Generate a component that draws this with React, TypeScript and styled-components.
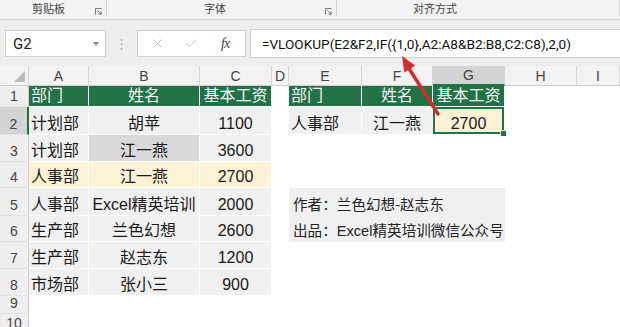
import React from "react";
import styled, { createGlobalStyle } from "styled-components";
import { X, Check } from "lucide-react";

const GREEN = "#217346";
const GREY = "#f0f0f0";
const DARK = "#d9d9d9";
const CREAM = "#fdf1d6";

const GlobalStyle = createGlobalStyle`
  html, body {
    margin: 0;
    padding: 0;
    background: #ffffff;
    overflow: hidden;
  }
  body {
    font-family: "Liberation Sans", "Noto Sans CJK SC", sans-serif;
    color: #222;
  }
`;

const Page = styled.div`
  position: relative;
  display: flex;
  flex-direction: column;
  width: 620px;
  height: 327px;
  overflow: hidden;
`;

const Ribbon = styled.div`
  display: flex;
  height: 20px;
  background: #f3f3f3;
  border-bottom: 1px solid #d8d8d8;
  box-shadow: 0 1px 2px rgba(0, 0, 0, 0.06);
`;

const Group = styled.div<{ $width: number; $pad: number }>`
  position: relative;
  display: flex;
  align-items: center;
  width: ${({ $width }) => $width}px;
  padding-left: ${({ $pad }) => $pad}px;
  box-sizing: border-box;
  border-right: 1px solid #d2d2d2;
  margin-bottom: 3px;
`;

const GroupLabel = styled.span`
  font-family: "Noto Sans CJK SC", sans-serif;
  font-size: 11px;
  color: #444;
  flex: 1;
`;

const Launcher = styled.svg`
  width: 7px;
  height: 7px;
  margin: 6px 4px 0 0;
  color: #666;
`;

const FormulaBand = styled.div`
  display: flex;
  align-items: center;
  height: 46px;
  padding: 10px 0 9px 5px;
  box-sizing: border-box;
  background: #eeeeee;
`;

const NameBox = styled.div`
  display: flex;
  align-items: center;
  justify-content: space-between;
  width: 101px;
  height: 27px;
  box-sizing: border-box;
  padding: 0 6px 0 7px;
  background: #fff;
  border: 1px solid #d0d0d0;
  font-family: "Roboto", "Liberation Sans", sans-serif;
  font-size: 15px;
  color: #222;
`;

const Caret = styled.span`
  width: 0;
  height: 0;
  border-left: 3.5px solid transparent;
  border-right: 3.5px solid transparent;
  border-top: 4px solid #888;
`;

const Dots = styled.span`
  width: 31px;
  text-align: center;
  color: #b0b0b0;
  font-size: 13px;
`;

const ActionBox = styled.div`
  display: flex;
  align-items: center;
  width: 109px;
  height: 27px;
  box-sizing: border-box;
  padding-left: 12px;
  gap: 19px;
  background: #fff;
  border: 1px solid #d0d0d0;
  color: #b8b8b8;
`;

const Fx = styled.span`
  margin-left: 3px;
  font-family: "Liberation Serif", serif;
  font-style: italic;
  font-size: 14px;
  color: #444;
  letter-spacing: -1px;
`;

const FormulaInput = styled.div`
  flex: 1;
  display: flex;
  align-items: center;
  height: 27px;
  margin-left: 4px;
  padding-left: 11px;
  background: #fff;
  border: 1px solid #d0d0d0;
  border-right: none;
  font-family: "Roboto", "Liberation Sans", sans-serif;
  font-size: 13.6px;
  color: #111;
  white-space: nowrap;
`;

const Sheet = styled.div`
  flex: 1;
  display: grid;
  grid-template-columns: 29px 60px 111px 72px 17px 73px 71px 72px 72px 1fr;
  grid-template-rows: 20px 21px 28px 27px 26px 28px 26px 27px 27px 18px 1fr;
  background: #fff;
`;

const Corner = styled.div`
  display: flex;
  align-items: flex-end;
  justify-content: flex-end;
  padding: 0 3px 3px 0;
  background: #f3f3f3;
  border-right: 1px solid #cfcfcf;
  border-bottom: 1px solid #cfcfcf;
`;

const ColHead = styled.div<{ $active?: boolean }>`
  display: flex;
  align-items: center;
  justify-content: center;
  font-size: 14px;
  color: #444;
  background: ${({ $active }) => ($active ? "#d4d4d4" : "#f3f3f3")};
  border-right: 1px solid #d6d6d6;
  border-bottom: ${({ $active }) => ($active ? `2px solid ${GREEN}` : "1px solid #cfcfcf")};
`;

const RowHead = styled.div<{ $active?: boolean }>`
  display: flex;
  align-items: flex-end;
  justify-content: center;
  line-height: 19px;
  font-size: 14px;
  color: #444;
  background: ${({ $active }) => ($active ? "#d4d4d4" : "#efefef")};
  border-right: ${({ $active }) => ($active ? `2px solid ${GREEN}` : "1px solid #cfcfcf")};
  border-bottom: 1px solid #e2e2e2;
`;

const Cell = styled.div<{ $bg?: string; $align?: "left" | "center"; $head?: boolean; $selected?: boolean }>`
  position: relative;
  display: flex;
  align-items: flex-end;
  justify-content: ${({ $align }) => ($align === "left" ? "flex-start" : "center")};
  padding-left: ${({ $align }) => ($align === "left" ? "2px" : "0")};
  line-height: 20px;
  font-size: 16px;
  white-space: nowrap;
  color: ${({ $head }) => ($head ? "#f4f4f4" : "#1a1a1a")};
  background: ${({ $bg }) => $bg || "transparent"};
  border-right: 1px solid #fff;
  border-bottom: 1px solid #fff;
  box-shadow: ${({ $selected }) => ($selected ? `inset 0 0 0 2px ${GREEN}` : "none")};

  &::after {
    content: "";
    display: ${({ $selected }) => ($selected ? "block" : "none")};
    position: absolute;
    right: -3px;
    bottom: -3px;
    width: 5px;
    height: 5px;
    background: ${GREEN};
    border: 1px solid #fff;
  }
`;

const Spacer = styled.div<{ $span: number }>`
  grid-column: span ${({ $span }) => $span};
`;

const NoteBox = styled.div`
  grid-column: span 3;
  grid-row: span 2;
  display: grid;
  grid-template-rows: 28px 26px;
  padding-left: 4px;
  background: ${GREY};
  font-family: "Liberation Sans", "Noto Sans CJK SC", sans-serif;
  font-size: 14.6px;
  color: #222;
`;

const NoteLine = styled.div`
  display: flex;
  align-items: flex-end;
  line-height: 20px;
  padding-bottom: 1px;
  white-space: nowrap;
`;

const Overlay = styled.svg`
  position: absolute;
  left: 0;
  top: 0;
  pointer-events: none;
`;

type Row = {
  dept: string;
  name: string;
  pay: string;
  bg?: string;
  nameBg?: string;
};

const data: Row[] = [
  { dept: "计划部", name: "胡苹", pay: "1100" },
  { dept: "计划部", name: "江一燕", pay: "3600", nameBg: DARK },
  { dept: "人事部", name: "江一燕", pay: "2700", bg: CREAM },
  { dept: "人事部", name: "Excel精英培训", pay: "2000" },
  { dept: "生产部", name: "兰色幻想", pay: "2600" },
  { dept: "生产部", name: "赵志东", pay: "1200" },
  { dept: "市场部", name: "张小三", pay: "900" },
];

const letters = ["A", "B", "C", "D", "E", "F", "G", "H", "I"];

const LauncherIcon = () => (
  <Launcher viewBox="0 0 7 7" fill="none" stroke="currentColor" strokeWidth="0.9">
    <path d="M0.5 6.5 V0.5 H6.5" />
    <path d="M2.2 2.2 L6.2 6.2 M6.2 3.4 V6.2 H3.4" />
  </Launcher>
);

const App: React.FC = () => {
  const renderRight = (row: number) => {
    if (row === 1)
      return (
        <>
          <Cell $bg={GREEN} $head $align="left">部门</Cell>
          <Cell $bg={GREEN} $head>姓名</Cell>
          <Cell $bg={GREEN} $head>基本工资</Cell>
        </>
      );
    if (row === 2)
      return (
        <>
          <Cell $bg={GREY} $align="left">人事部</Cell>
          <Cell $bg={GREY}>江一燕</Cell>
          <Cell $bg={CREAM} $selected>2700</Cell>
        </>
      );
    if (row === 5)
      return (
        <NoteBox>
          <NoteLine>作者：兰色幻想-赵志东</NoteLine>
          <NoteLine>出品：Excel精英培训微信公众号</NoteLine>
        </NoteBox>
      );
    if (row === 6) return null;
    return <Spacer $span={3} />;
  };

  return (
    <>
      <GlobalStyle />
      <Page>
        <Ribbon>
          <Group $width={107} $pad={32}>
            <GroupLabel>剪贴板</GroupLabel>
            <LauncherIcon />
          </Group>
          <Group $width={230} $pad={97}>
            <GroupLabel>字体</GroupLabel>
            <LauncherIcon />
          </Group>
          <Group $width={283} $pad={76}>
            <GroupLabel>对齐方式</GroupLabel>
          </Group>
        </Ribbon>

        <FormulaBand>
          <NameBox>
            G2
            <Caret />
          </NameBox>
          <Dots>⋮</Dots>
          <ActionBox>
            <X size={15} strokeWidth={1.3} />
            <Check size={15} strokeWidth={1.3} />
            <Fx>fx</Fx>
          </ActionBox>
          <FormulaInput>=VLOOKUP(E2&amp;F2,IF({"{"}1,0{"}"},A2:A8&amp;B2:B8,C2:C8),2,0)</FormulaInput>
        </FormulaBand>

        <Sheet>
          <Corner>
            <svg width="11" height="11" viewBox="0 0 11 11">
              <polygon points="11,0 11,11 0,11" fill="#b9b9b9" />
            </svg>
          </Corner>
          {letters.map((l) => (
            <ColHead key={l} $active={l === "G"}>
              {l}
            </ColHead>
          ))}

          <RowHead>1</RowHead>
          <Cell $bg={GREEN} $head $align="left">部门</Cell>
          <Cell $bg={GREEN} $head>姓名</Cell>
          <Cell $bg={GREEN} $head>基本工资</Cell>
          <Spacer $span={1} />
          {renderRight(1)}
          <Spacer $span={2} />

          {data.map((d, i) => {
            const row = i + 2;
            const bg = d.bg || GREY;
            return (
              <React.Fragment key={row}>
                <RowHead $active={row === 2}>{row}</RowHead>
                <Cell $bg={bg} $align="left">{d.dept}</Cell>
                <Cell $bg={d.nameBg || bg}>{d.name}</Cell>
                <Cell $bg={bg}>{d.pay}</Cell>
                <Spacer $span={1} />
                {renderRight(row)}
                <Spacer $span={2} />
              </React.Fragment>
            );
          })}

          <RowHead>9</RowHead>
          <Spacer $span={9} />
          <RowHead>10</RowHead>
        </Sheet>

        <Overlay width="620" height="327">
          <line x1="408" y1="67" x2="438" y2="114" stroke="#d62a2a" strokeWidth="3.4" strokeLinecap="round" />
          <polygon points="402,56 404.4,72.4 415,65.6" fill="#d62a2a" />
        </Overlay>
      </Page>
    </>
  );
};

export default App;
